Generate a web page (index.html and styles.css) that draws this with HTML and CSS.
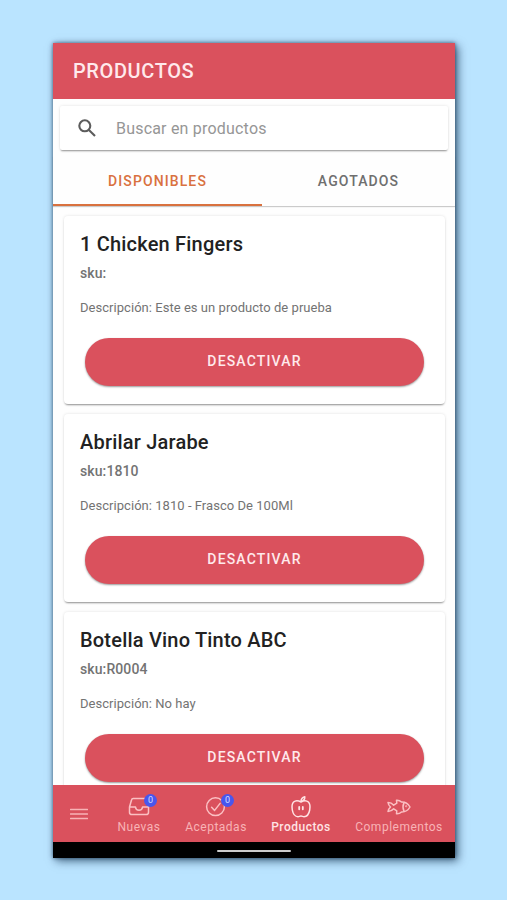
FILE: index.html
```html
<!DOCTYPE html>
<html lang="es">
<head>
  <meta charset="utf-8">
  <title>Productos</title>
  <link rel="stylesheet" href="styles.css">
</head>
<body>
<div class="phone">
  <header class="toolbar">
    <h1>PRODUCTOS</h1>
  </header>
  <div class="searchbar">
    <svg class="search-icon" viewBox="0 0 18 18">
      <circle cx="6.8" cy="6.8" r="5.5"/>
      <path d="M10.7 10.7L17 17"/>
    </svg>
    <span>Buscar en productos</span>
  </div>
  <div class="segment">
    <div class="segment-button checked">DISPONIBLES</div>
    <div class="segment-button">AGOTADOS</div>
  </div>
  <main class="content">
    <div class="card">
      <h2>1 Chicken Fingers</h2>
      <h3>sku:</h3>
      <p>Descripción: Este es un producto de prueba</p>
      <div class="button">DESACTIVAR</div>
    </div>
    <div class="card">
      <h2>Abrilar Jarabe</h2>
      <h3>sku:1810</h3>
      <p>Descripción: 1810 - Frasco De 100Ml</p>
      <div class="button">DESACTIVAR</div>
    </div>
    <div class="card">
      <h2>Botella Vino Tinto ABC</h2>
      <h3>sku:R0004</h3>
      <p>Descripción: No hay</p>
      <div class="button">DESACTIVAR</div>
    </div>
  </main>
  <nav class="tabs">
    <div class="menu">
      <svg viewBox="0 0 18 12">
        <path d="M.5 1.5h17M.5 6h17M.5 10.5h17"/>
      </svg>
    </div>
    <div class="tab nuevas">
      <div class="icon">
        <svg viewBox="0 0 22 22">
          <path d="M5.200 2.600h11.600q1.400 0 1.700 1.400l2 7v5.200q0 2.400-2.400 2.400H3.900q-2.400 0-2.400-2.400V11l2-7q.3-1.400 1.700-1.400zM1.500 11h6q.3 3.200 3.500 3.200t3.500-3.200h6"/>
        </svg>
        <span class="badge">0</span>
      </div>
      <span>Nuevas</span>
    </div>
    <div class="tab aceptadas">
      <div class="icon">
        <svg viewBox="0 0 22 22">
          <circle cx="10.500" cy="10.700" r="8.900"/>
          <path d="M6.600 11.200l3 3.200 5.500-7"/>
        </svg>
        <span class="badge">0</span>
      </div>
      <span>Aceptadas</span>
    </div>
    <div class="tab productos selected">
      <div class="icon">
        <svg viewBox="0 0 22 24">
          <path d="M11 7C8.500 5.500 5.500 5.300 3.600 7 1.700 8.800 1.800 12 2.300 15c.7 3.800 3 6.700 5.700 6.700 1.200 0 1.800-.6 3-.6s1.800.6 3 .6c2.700 0 5-2.900 5.700-6.700.5-3 .6-6.200-1.300-8C16.500 5.300 13.500 5.500 11 7zM11 6.500Q11 2.600 14.800 1.700 15 5.500 11 6.500z"/>
          <path class="seeds" d="M9.200 12v2.300M12.800 12v2.300"/>
        </svg>
      </div>
      <span>Productos</span>
    </div>
    <div class="tab complementos">
      <div class="icon">
        <svg class="fish" viewBox="0 0 24 18">
          <path d="M1 4.500Q4.500 4.500 6.700 7.200L9.800 5.200 9.500 2.200Q12.500 2 14.500 4 20 3.800 23 9 20 14.200 14.500 14 12.500 16 9.500 15.800L9.800 12.800 6.700 10.800Q4.500 13.500 1 13.500 1.300 11 3.500 9 1.300 7 1 4.500zM17 4.600q-2 4.400 0 8.800"/>
          <circle cx="19.200" cy="8.300" r=".3"/>
        </svg>
      </div>
      <span>Complementos</span>
    </div>
  </nav>
  <div class="gesture-bar"><span></span></div>
</div>
</body>
</html>
```
FILE: styles.css
```css
:root {
  --danger: #da515d;
  --accent: #d9713f;
}

* {
  box-sizing: border-box;
}

body {
  margin: 0;
  padding: 43px 52px 42px 53px;
  height: 900px;
  overflow: hidden;
  background: #bae4ff;
  font-family: Roboto, "Liberation Sans", sans-serif;
}

h1, h2, h3, p {
  margin: 0;
}

.phone {
  display: flex;
  flex-direction: column;
  height: 815px;
  background: #fefefe;
  box-shadow: 0 0 4px rgba(0, 30, 60, 0.6), 3px 3px 9px rgba(0, 30, 60, 0.6);
}

.toolbar {
  display: flex;
  align-items: center;
  flex: none;
  height: 56px;
  padding: 0 20px 1px;
  background: var(--danger);
  color: #ffe9ec;
}

h1 {
  font-size: 20px;
  font-weight: 500;
  line-height: 24px;
  letter-spacing: 0.6px;
}

.searchbar {
  display: flex;
  align-items: center;
  flex: none;
  height: 44px;
  margin: 7px 7px 6px;
  padding-left: 18px;
  gap: 20px;
  border-radius: 2px;
  background: #fff;
  box-shadow: 0 2px 2px -1px rgba(0, 0, 0, 0.4), 0 0 3px rgba(0, 0, 0, 0.12);
  color: #969696;
  font-size: 16px;
  letter-spacing: 0.2px;
}

svg {
  fill: none;
  stroke: currentColor;
  stroke-linecap: round;
  stroke-linejoin: round;
}

.search-icon {
  width: 18px;
  height: 18px;
  color: #5c5c5c;
  stroke-width: 2.1;
  stroke-linecap: butt;
}

.segment {
  display: flex;
  flex: none;
  height: 50px;
  box-shadow: 0 1px 1px rgba(0, 0, 0, 0.2);
}

.segment-button {
  flex: 1;
  padding-top: 17px;
  color: #6f6f6f;
  font-size: 14px;
  font-weight: 500;
  line-height: 16px;
  letter-spacing: 1.1px;
  text-align: center;
}

.segment-button.checked {
  flex: 0 0 209px;
  border-bottom: 2px solid var(--accent);
  color: var(--accent);
}

.content {
  flex: 1;
  min-height: 0;
  overflow: hidden;
  padding: 10px 10px 0 11px;
}

.card {
  height: 188px;
  margin-bottom: 10px;
  padding: 16px;
  border-radius: 4px;
  background: #fff;
  box-shadow: 0 2px 2px -1px rgba(0, 0, 0, 0.4), 0 0 3px rgba(0, 0, 0, 0.12);
}

h2 {
  color: #222;
  font-size: 20px;
  font-weight: 500;
  line-height: 24px;
  letter-spacing: 0.2px;
}

h3 {
  margin-top: 9px;
  color: #737373;
  font-size: 14px;
  font-weight: 500;
  line-height: 16px;
  letter-spacing: 0.1px;
}

.card p {
  margin-top: 19px;
  color: #737373;
  font-size: 13px;
  line-height: 16px;
  letter-spacing: 0.04px;
}

.button {
  height: 48px;
  margin: 22px 5px 0;
  border-radius: 24px;
  background: var(--danger);
  box-shadow: 0 1px 2px rgba(0, 0, 0, 0.4);
  color: #ffe9ec;
  font-size: 14px;
  font-weight: 500;
  line-height: 46px;
  letter-spacing: 1.15px;
  text-align: center;
}

.tabs {
  z-index: 1;
  display: flex;
  flex: none;
  height: 57px;
  background: var(--danger);
  color: #f8b3b6;
}

.menu {
  width: 52px;
  padding: 23px 0 0 17px;
}

.menu svg {
  display: block;
  width: 18px;
  height: 12px;
  stroke-width: 1.3;
}

.tab {
  display: flex;
  flex-direction: column;
  align-items: center;
  padding-top: 9px;
  font-size: 12px;
  line-height: 16px;
  letter-spacing: 0.5px;
}

.nuevas {
  width: 68px;
}

.aceptadas {
  width: 86px;
}

.productos {
  width: 84px;
}

.complementos {
  width: 112px;
}

.selected {
  color: #ffe3e4;
  font-weight: 500;
}

.icon {
  position: relative;
  display: flex;
  align-items: center;
  justify-content: center;
  height: 25px;
}

.icon svg {
  width: 22px;
  height: 22px;
  color: #fbc0c3;
  stroke-width: 1.5;
}

.selected .icon svg {
  height: 24px;
  color: #ffe3e4;
}

.icon .seeds {
  stroke-width: 1.8;
}

.icon .fish {
  width: 24px;
  height: 18px;
}

.badge {
  position: absolute;
  top: 0;
  left: 16px;
  width: 13px;
  height: 13px;
  border-radius: 50%;
  background: #4856ee;
  color: #d5dcff;
  font-size: 9px;
  line-height: 13px;
  letter-spacing: 0;
  text-align: center;
}

.gesture-bar {
  display: flex;
  align-items: center;
  justify-content: center;
  flex: none;
  height: 16px;
  background: #000;
}

.gesture-bar span {
  width: 74px;
  height: 2px;
  margin-top: 2px;
  border-radius: 1px;
  background: #ccc;
}
```
